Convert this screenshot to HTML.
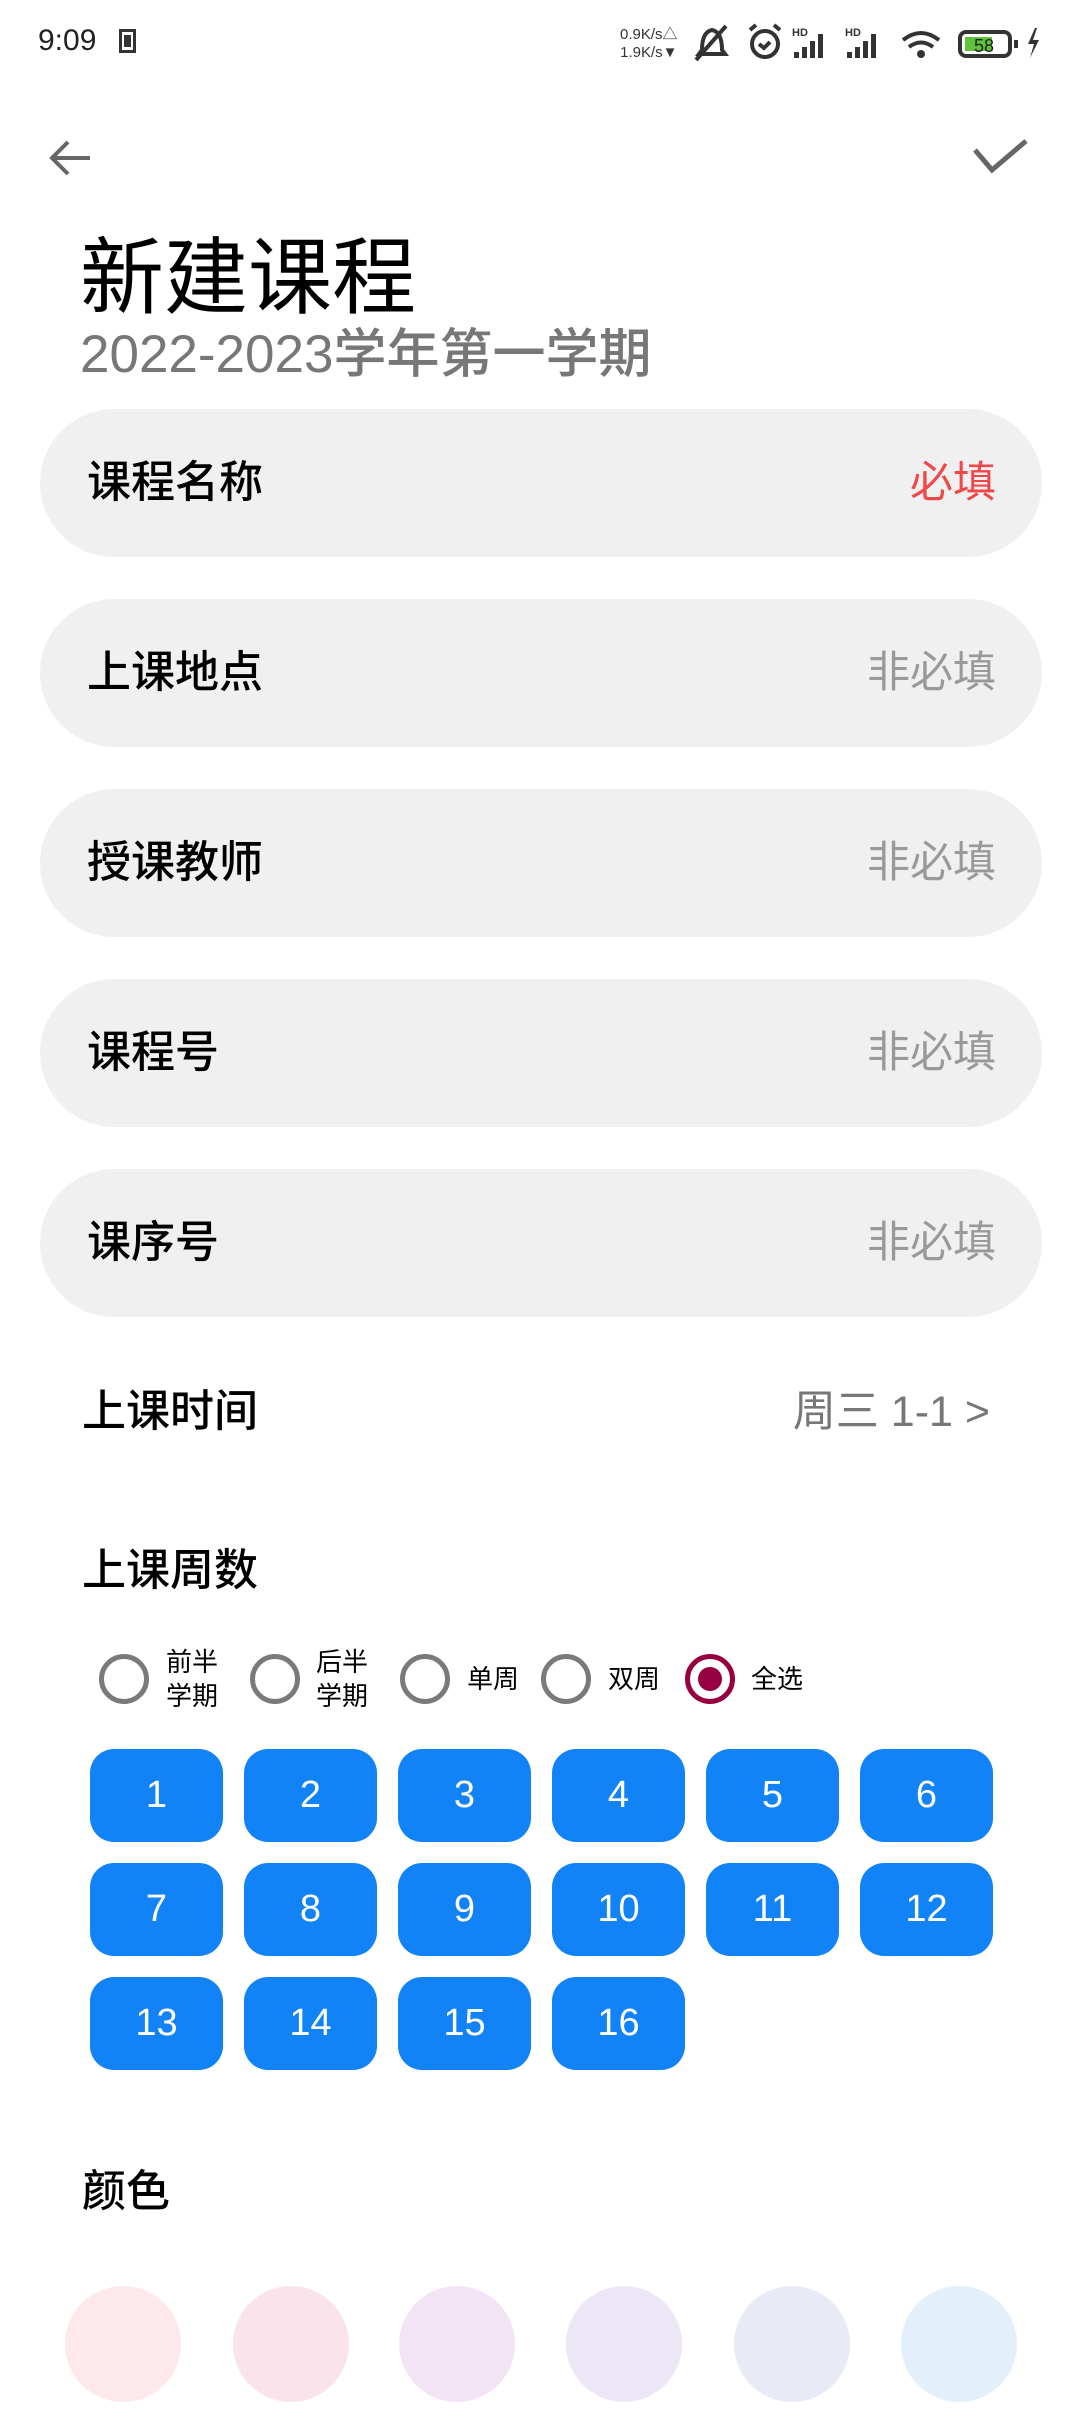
<!DOCTYPE html>
<html><head><meta charset="utf-8"><style>
*{margin:0;padding:0;box-sizing:border-box}
body{width:1080px;height:2434px;background:#fff;position:relative;overflow:hidden;font-family:"Liberation Sans","Noto Sans CJK SC",sans-serif;color:#000}
.a{position:absolute;white-space:nowrap}
.f{position:absolute;left:40px;width:1002px;height:148px;border-radius:74px;background:#f0f0f0}
.f .l{position:absolute;left:47px;top:0;line-height:148px;font-size:44px;font-weight:500}
.f .r{position:absolute;right:46px;top:0;line-height:148px;font-size:43px;color:#999}
.w{position:absolute;width:133px;height:93px;border-radius:24px;background:#1282f7;color:#fff;font-size:38px;text-align:center;line-height:93px}
.rd{position:absolute;width:50px;height:50px;border-radius:50%;border:5px solid #7a7a7a}
.rl{position:absolute;font-size:26px;line-height:34px}
.c{position:absolute;width:116px;height:116px;border-radius:50%;top:2286px}
</style></head><body>
<div class="a" style="left:38px;top:24px;font-size:30px;color:#222">9:09</div>
<div class="a" style="left:119px;top:29px;width:17px;height:24px;border:3px solid #333;background:#fff"><div style="margin:3px 2px;width:7px;height:12px;background:#333"></div></div>
<div class="a" style="left:620px;top:26px;font-size:15px;line-height:18px;color:#333;text-align:right">0.9K/s△<br>1.9K/s▼</div>
<svg class="a" style="left:690px;top:20px" width="360" height="45" viewBox="0 0 360 45">
<g fill="none" stroke="#333" stroke-width="4"><path d="M12 30 Q12 12 22 10 Q32 12 32 30 L35 34 H9 Z"/><path d="M6 40 L36 6"/>
<circle cx="75" cy="24" r="13"/><path d="M69 24 l5 4 l6 -6"/><path d="M60 10 l6 -5 M90 10 l-6 -5"/></g>
<g fill="#333"><text x="102" y="16" font-size="11" font-weight="bold" font-family="Liberation Sans">HD</text>
<rect x="104" y="32" width="5" height="6"/><rect x="112" y="27" width="5" height="11"/><rect x="120" y="21" width="5" height="17"/><rect x="128" y="14" width="5" height="24"/>
<text x="155" y="16" font-size="11" font-weight="bold" font-family="Liberation Sans">HD</text>
<rect x="157" y="32" width="5" height="6"/><rect x="165" y="27" width="5" height="11"/><rect x="173" y="21" width="5" height="17"/><rect x="181" y="14" width="5" height="24"/>
<circle cx="231" cy="34" r="4"/></g>
<g fill="none" stroke="#333" stroke-width="4"><path d="M213 20 Q231 6 249 20 M219 27 Q231 18 243 27"/>
<rect x="270" y="12" width="50" height="24" rx="6"/><path d="M326 20 v8"/></g>
<rect x="275" y="17" width="27" height="14" fill="#5ec23a"/>
<text x="284" y="32" font-size="18" font-family="Liberation Sans" fill="#222">58</text>
<path d="M345 8 l-7 16 h6 l-4 14 l9 -18 h-6 l4 -12z" fill="#333"/>
</svg>
<svg class="a" style="left:48px;top:138px" width="44" height="40" viewBox="0 0 44 40"><path d="M42 20 H5 M20 4 L4 20 L20 36" fill="none" stroke="#666" stroke-width="4"/></svg>
<svg class="a" style="left:972px;top:138px" width="58" height="40" viewBox="0 0 58 40"><path d="M3 12 L20 32 L54 3" fill="none" stroke="#666" stroke-width="5"/></svg>
<div class="a" style="left:80px;top:228px;font-size:84px;line-height:100px">新建课程</div>
<div class="a" style="left:80px;top:323px;font-size:53px;line-height:64px;color:#777;font-weight:500">2022-2023学年第一学期</div>
<div class="f" style="top:409px"><span class="l">课程名称</span><span class="r" style="color:#f04848">必填</span></div>
<div class="f" style="top:599px"><span class="l">上课地点</span><span class="r">非必填</span></div>
<div class="f" style="top:789px"><span class="l">授课教师</span><span class="r">非必填</span></div>
<div class="f" style="top:979px"><span class="l">课程号</span><span class="r">非必填</span></div>
<div class="f" style="top:1169px"><span class="l">课序号</span><span class="r">非必填</span></div>
<div class="a" style="left:82px;top:1386px;font-size:44px;line-height:52px;font-weight:500">上课时间</div>
<div class="a" style="right:90px;top:1386px;font-size:43px;line-height:52px;color:#777">周三 1-1 &gt;</div>
<div class="a" style="left:82px;top:1545px;font-size:44px;line-height:52px;font-weight:500">上课周数</div>
<div class="rd" style="left:99px;top:1654px"></div><div class="rl" style="left:166px;top:1645px">前半<br>学期</div>
<div class="rd" style="left:250px;top:1654px"></div><div class="rl" style="left:316px;top:1645px">后半<br>学期</div>
<div class="rd" style="left:400px;top:1654px"></div><div class="rl" style="left:467px;top:1662px">单周</div>
<div class="rd" style="left:541px;top:1654px"></div><div class="rl" style="left:608px;top:1662px">双周</div>
<div class="rd" style="left:685px;top:1654px;border-color:#960040"><div style="margin:8px;width:24px;height:24px;border-radius:50%;background:#960040"></div></div><div class="rl" style="left:751px;top:1662px">全选</div>
<div class="w" style="left:90px;top:1749px">1</div><div class="w" style="left:244px;top:1749px">2</div><div class="w" style="left:398px;top:1749px">3</div><div class="w" style="left:552px;top:1749px">4</div><div class="w" style="left:706px;top:1749px">5</div><div class="w" style="left:860px;top:1749px">6</div>
<div class="w" style="left:90px;top:1863px">7</div><div class="w" style="left:244px;top:1863px">8</div><div class="w" style="left:398px;top:1863px">9</div><div class="w" style="left:552px;top:1863px">10</div><div class="w" style="left:706px;top:1863px">11</div><div class="w" style="left:860px;top:1863px">12</div>
<div class="w" style="left:90px;top:1977px">13</div><div class="w" style="left:244px;top:1977px">14</div><div class="w" style="left:398px;top:1977px">15</div><div class="w" style="left:552px;top:1977px">16</div>
<div class="a" style="left:82px;top:2166px;font-size:44px;line-height:52px;font-weight:500">颜色</div>
<div class="c" style="left:65px;background:#fde9ec"></div>
<div class="c" style="left:233px;background:#fae3ea"></div>
<div class="c" style="left:399px;background:#f3e4f5"></div>
<div class="c" style="left:566px;background:#ece6f6"></div>
<div class="c" style="left:734px;background:#e8eaf6"></div>
<div class="c" style="left:901px;background:#e3f0fc"></div>
</body></html>
